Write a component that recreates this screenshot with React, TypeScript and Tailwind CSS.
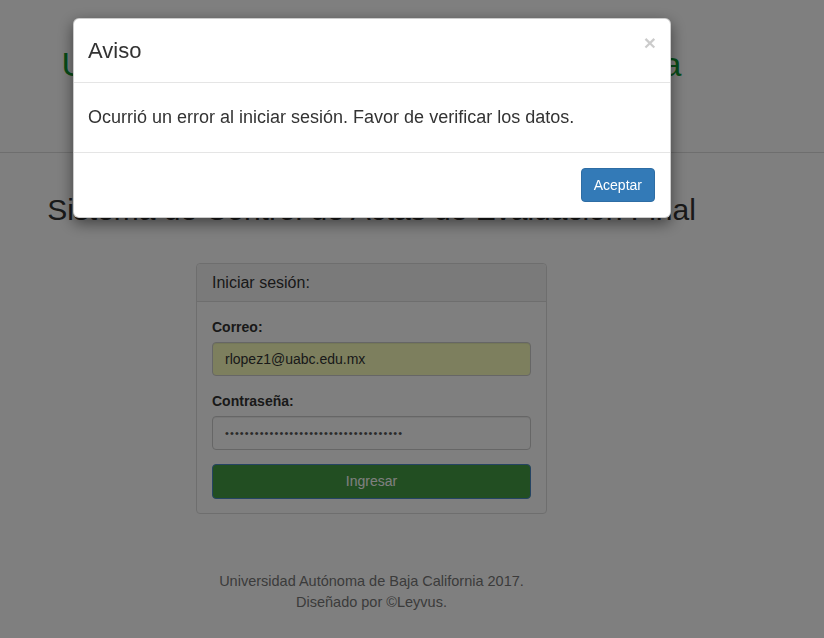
import React from 'react';

// Pantalla de acceso con el aviso de error abierto encima
export default function App() {
  const password = '•'.repeat(36);

  return (
    <div className="relative min-h-[638px] bg-white text-[14px] text-[#333] font-['Liberation_Sans',Arial,sans-serif]">
      {/* Encabezado */}
      <div className="h-[153px] border-b border-[#ddd]">
        <div className="w-[743px] pt-[46px] text-center">
          <h1 className="text-[34px] leading-[37px] text-[#0e9a30]">Universidad Autónoma de Baja California</h1>
        </div>
      </div>

      <div className="w-[743px] flex flex-col items-center">
        <h2 className="mt-[40px] text-[30px] leading-[33px] text-[#333]">Sistema de Control de Actas de Evaluación Final</h2>

        {/* Panel de inicio de sesión */}
        <div className="mt-[37px] w-[351px] rounded border border-[#ddd] bg-white">
          <div className="rounded-t border-b border-[#ddd] bg-[#f5f5f5] px-[15px] py-[10px] text-[16px] leading-[17px] text-[#333]">
            Iniciar sesión:
          </div>
          <div className="p-[15px] pb-[14px]">
            <label className="block mb-[5px] font-bold leading-[20px]">Correo:</label>
            <input
              readOnly
              value="rlopez1@uabc.edu.mx"
              className="block w-full h-[34px] rounded border border-[#ccc] bg-[#faffbd] px-[12px] text-[14px] text-[#333] shadow-[inset_0_1px_1px_rgba(0,0,0,0.075)] outline-none"
            />
            <label className="block mt-[15px] mb-[5px] font-bold leading-[20px]">Contraseña:</label>
            <input
              readOnly
              value={password}
              className="block w-full h-[34px] rounded border border-[#ccc] bg-white px-[12px] text-[11px] tracking-[1.1px] text-[#555] shadow-[inset_0_1px_1px_rgba(0,0,0,0.075)] outline-none"
            />
            <button className="mt-[14px] block w-full h-[35px] rounded border border-[#4a88c7] bg-[#449d44] text-[14px] text-white">
              Ingresar
            </button>
          </div>
        </div>

        <div className="mt-[57px] text-center text-[14.5px] leading-[21px] text-[#777]">
          <p>Universidad Autónoma de Baja California 2017.</p>
          <p>Diseñado por ©Leyvus.</p>
        </div>
      </div>

      {/* Fondo del modal */}
      <div className="fixed inset-0 bg-black/50" />

      {/* Modal de aviso */}
      <div className="fixed left-[73px] top-[18px] w-[598px] rounded-md border border-black/20 bg-white shadow-[0_5px_15px_rgba(0,0,0,0.5)]">
        <div className="flex items-start justify-between border-b border-[#e5e5e5] px-[14px] py-[15px]">
          <h3 className="text-[22px] leading-[33px] text-[#333]">Aviso</h3>
          <button className="mt-[-2px] text-[21px] font-bold leading-[21px] text-black opacity-20">×</button>
        </div>
        <div className="px-[14px] py-[23px] text-[18px] leading-[23px] text-[#333]">
          Ocurrió un error al iniciar sesión. Favor de verificar los datos.
        </div>
        <div className="flex justify-end border-t border-[#e5e5e5] p-[15px]">
          <button className="h-[34px] rounded border border-[#2e6da4] bg-[#337ab7] px-[12px] text-[14px] text-white">
            Aceptar
          </button>
        </div>
      </div>
    </div>
  );
}
